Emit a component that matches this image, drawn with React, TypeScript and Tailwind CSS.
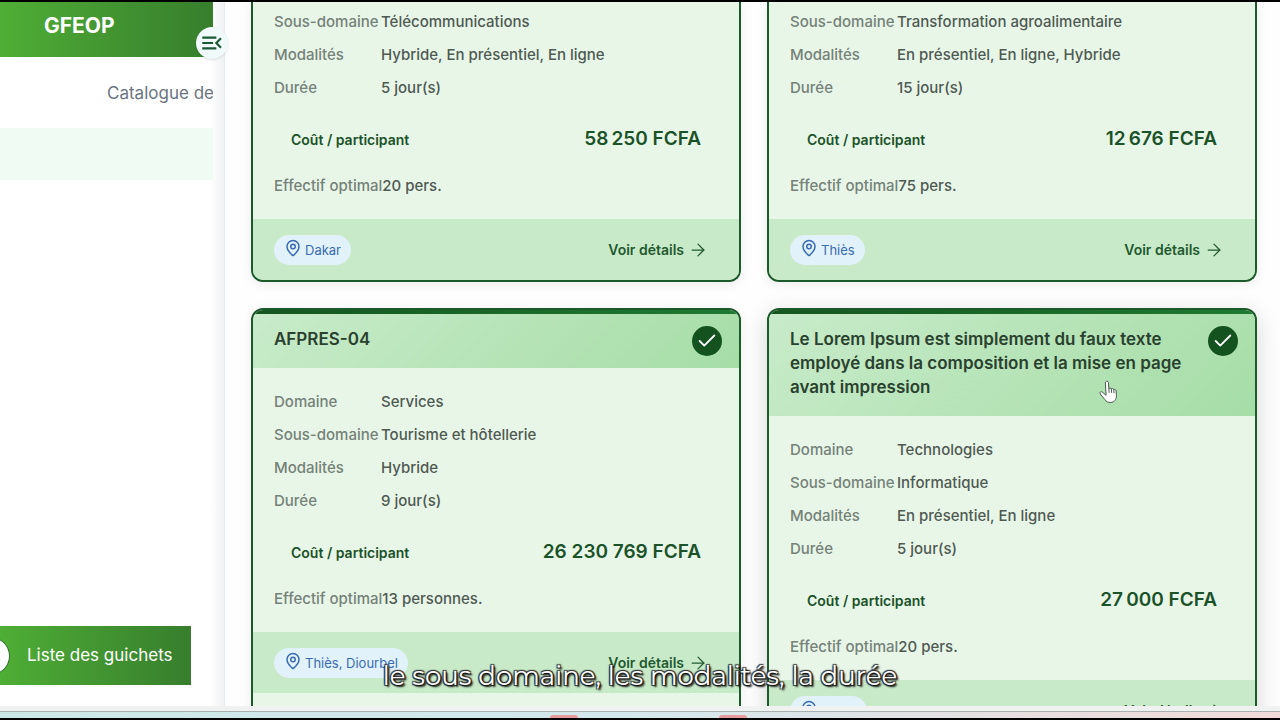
import { ArrowRight, Check, MapPin } from "lucide-react";
import { MdMenuOpen } from "react-icons/md";

type Row = { label: string; value: string };

type Training = {
  title?: string;
  rows: Row[];
  cost: string;
  size: string;
  place: string;
  active?: boolean;
};

// first two entries are scrolled under the top edge, so they have no title
const trainings: Training[] = [
  {
    rows: [
      { label: "Sous-domaine", value: "Télécommunications" },
      { label: "Modalités", value: "Hybride, En présentiel, En ligne" },
      { label: "Durée", value: "5 jour(s)" },
    ],
    cost: "58\u202f250 FCFA",
    size: "20 pers.",
    place: "Dakar",
  },
  {
    rows: [
      { label: "Sous-domaine", value: "Transformation agroalimentaire" },
      { label: "Modalités", value: "En présentiel, En ligne, Hybride" },
      { label: "Durée", value: "15 jour(s)" },
    ],
    cost: "12\u202f676 FCFA",
    size: "75 pers.",
    place: "Thiès",
  },
  {
    title: "AFPRES-04",
    rows: [
      { label: "Domaine", value: "Services" },
      { label: "Sous-domaine", value: "Tourisme et hôtellerie" },
      { label: "Modalités", value: "Hybride" },
      { label: "Durée", value: "9 jour(s)" },
    ],
    cost: "26 230 769 FCFA",
    size: "13 personnes.",
    place: "Thiès, Diourbel",
  },
  {
    title:
      "Le Lorem Ipsum est simplement du faux texte employé dans la composition et la mise en page avant impression",
    rows: [
      { label: "Domaine", value: "Technologies" },
      { label: "Sous-domaine", value: "Informatique" },
      { label: "Modalités", value: "En présentiel, En ligne" },
      { label: "Durée", value: "5 jour(s)" },
    ],
    cost: "27\u202f000 FCFA",
    size: "20 pers.",
    place: "Dakar",
    active: true,
  },
];

function InfoRow({ label, value }: Row) {
  return (
    <div className="flex h-[25px] items-center text-[15px] font-medium whitespace-nowrap">
      <dt className="min-w-[107px] text-[#758278]">{label}</dt>
      <dd className="text-[#4f5a52]">{value}</dd>
    </div>
  );
}

function TrainingCard({ training }: { training: Training }) {
  const { title, rows, cost, size, place, active } = training;

  return (
    <article
      className={`relative overflow-hidden border-2 border-[#1c5a2b] bg-[#e8f6e8] ${
        title ? "rounded-xl" : "rounded-b-xl border-t-0"
      } ${
        active
          ? "shadow-[0_6px_24px_rgba(0,0,0,0.16)]"
          : "shadow-[0_2px_12px_rgba(0,0,0,0.08)]"
      }`}
    >
      {title && (
        <>
          <div className="h-1 bg-linear-to-r from-[#14561f] to-[#1f7a33]" />
          <header className="bg-linear-135 from-[#c8ebc9] to-[#a6dda7] px-[21px] pt-[13px] pb-[17px]">
            <h2 className="mr-12 text-[17px] leading-6 font-semibold text-[#29412e]">
              {title}
            </h2>
          </header>
          <span className="absolute top-4 right-[17px] flex size-[30px] items-center justify-center rounded-full bg-[#14531f] text-white">
            <Check size={22} strokeWidth={2} />
          </span>
        </>
      )}
      <div className={`px-[21px] pb-5 ${title ? "pt-[22px]" : "pt-2"}`}>
        <dl className="flex flex-col gap-2">
          {rows.map((row) => (
            <InfoRow key={row.label} {...row} />
          ))}
        </dl>
        <div className="mt-[7px] mb-1 flex h-[62px] items-center justify-between px-[17px] text-[#1b5228]">
          <span className="text-[14px] font-semibold">Coût / participant</span>
          <strong className="text-[19px] font-semibold">{cost}</strong>
        </div>
        <dl>
          <InfoRow label="Effectif optimal" value={size} />
        </dl>
      </div>
      <footer className="flex h-[61px] items-center justify-between bg-[#c9eac9] pr-[31px] pl-[21px]">
        <span className="flex h-[30px] items-center gap-[3px] rounded-full bg-[#e1f2fb] px-[10px] text-[13px] text-[#3a6bb0]">
          <MapPin size={18} strokeWidth={2} className="mb-1" />
          <span className="pt-[2px]">{place}</span>
        </span>
        <a
          href="#details"
          className="flex items-center gap-1 text-[14px] font-semibold text-[#22592f]"
        >
          Voir détails
          <ArrowRight size={20} strokeWidth={1.5} />
        </a>
      </footer>
    </article>
  );
}

function Sidebar() {
  return (
    <aside className="relative flex w-[225px] shrink-0 flex-col border-r border-[#e9ebee] bg-linear-to-r from-white from-94% to-[#f1f2f4]">
      <div className="mr-[11px] flex h-[55px] items-start bg-linear-to-r from-[#4fae35] to-[#377e2d] pt-2 pl-11 text-[21px] leading-8 font-bold text-white">
        GFEOP
      </div>
      <button
        type="button"
        aria-label="Réduire le menu"
        className="absolute top-[25px] -right-1 z-10 flex size-8 items-center justify-center rounded-full bg-[#f0fafa] text-[#1c5a35] shadow-sm"
      >
        <MdMenuOpen size={26} />
      </button>
      <nav className="mr-[11px] overflow-hidden whitespace-nowrap">
        <a
          href="#catalogue"
          className="flex h-[71px] items-center pt-[3px] pl-[107px] text-[17px] text-[#6a7480]"
        >
          Catalogue de
        </a>
        <div className="h-[52px] bg-[#f0fbf3]" />
      </nav>
      <button
        type="button"
        className="mt-auto mr-[33px] mb-[21px] flex h-[59px] items-center gap-[17px] overflow-hidden bg-linear-to-r from-[#4fae35] to-[#377e2d] text-[17px] whitespace-nowrap text-white"
      >
        <span className="-ml-7 size-[38px] shrink-0 rounded-full border border-[#2f6b2b] bg-white" />
        Liste des guichets
      </button>
    </aside>
  );
}

function HandCursor() {
  return (
    <svg
      viewBox="0 0 18 24"
      className="absolute top-[378px] left-[1099px] h-6 w-[18px]"
      fill="white"
      stroke="#4a5a4c"
      strokeWidth="1"
      strokeLinejoin="round"
      strokeLinecap="round"
    >
      <path d="M6.4 2.6c0-2 2.8-2 3 0l.5 6.2c.5-1 2.2-.9 2.5.2.6-.8 2.1-.5 2.4.6.8-.6 2.2 0 2.3 1.3l.3 4.9c.1 3.6-2.2 6.6-5.7 6.7-2.7.1-4.6-.9-6-3.1L1.2 13.8c-1-1.8 1.2-2.9 2.5-1.4l3.1 2.7z" />
      <path d="M9.9 8.8l.2 3.6M12.4 9l.2 3.5M14.8 9.6l.2 3.2" fill="none" />
    </svg>
  );
}

export default function App() {
  return (
    <div className="relative flex h-screen flex-col overflow-hidden border-y-2 border-black bg-white font-['Inter',sans-serif]">
      <div className="flex min-h-0 flex-1">
        <Sidebar />
        <main className="min-w-0 flex-1 overflow-hidden bg-[#fefefe] pr-[23px] pl-[26px]">
          <div className="grid grid-cols-2 gap-[26px]">
            {trainings.map((training, index) => (
              <TrainingCard key={index} training={training} />
            ))}
          </div>
        </main>
      </div>
      <div className="h-[5px] shrink-0 bg-[#eff2f1]" />
      <div className="flex h-[7px] shrink-0 items-end border-t border-[#a9b0b2] bg-linear-to-r from-[#cbe8e6] via-[#d5e8ec] to-[#f2dada]">
        <span className="ml-[43%] h-[3px] w-7 rounded-t bg-[#e79a9c]" />
        <span className="ml-[11%] h-[3px] w-7 rounded-t bg-[#e79a9c]" />
      </div>
      <HandCursor />
      <p className="absolute inset-x-0 bottom-[26px] text-center font-['Montserrat','Inter',sans-serif] text-[26px] leading-8 text-white [text-shadow:1px_1px_1px_#111,-1px_-1px_1px_#333,1px_-1px_1px_#333,-1px_1px_1px_#222,2px_2px_2px_#111]">
        le sous domaine, les modalités, la durée
      </p>
    </div>
  );
}
